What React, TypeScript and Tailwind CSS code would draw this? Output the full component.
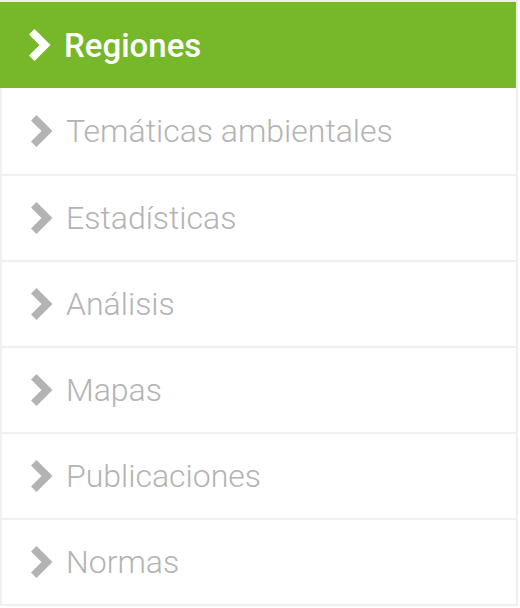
import React from "react";

const items = [
  "Temáticas ambientales",
  "Estadísticas",
  "Análisis",
  "Mapas",
  "Publicaciones",
  "Normas",
];

function Chevron({ color }: { color: string }) {
  return (
    <svg width="22" height="32" viewBox="0 0 22 32" className="shrink-0">
      <polygon points="0,5.5 5.5,0 21.5,16 5.5,32 0,26.5 10.5,16" fill={color} />
    </svg>
  );
}

export default function App() {
  return (
    <div className="w-[518px] bg-white" style={{ fontFamily: "Roboto, 'Liberation Sans', sans-serif" }}>
      <div className="border-t-2 border-[#eeeeee]">
        <div className="h-[86px] bg-[#76b82a] flex items-center pl-[29px] gap-[13px] border-r-2 border-[#eeeeee]">
          <Chevron color="#ffffff" />
          <span className="text-white text-[33px] font-medium leading-none">Regiones</span>
        </div>
        {items.map((t, i) => (
          <div
            key={t}
            className={`${i === 0 ? "h-[88px]" : "h-[86px]"} flex items-center pl-[29px] gap-[13px] border-x-2 border-b-2 border-[#f0f0f0]`}
          >
            <Chevron color="#b3b3b3" />
            <span className="text-[#b3b3b3] text-[32px] font-light leading-none">{t}</span>
          </div>
        ))}
      </div>
    </div>
  );
}
